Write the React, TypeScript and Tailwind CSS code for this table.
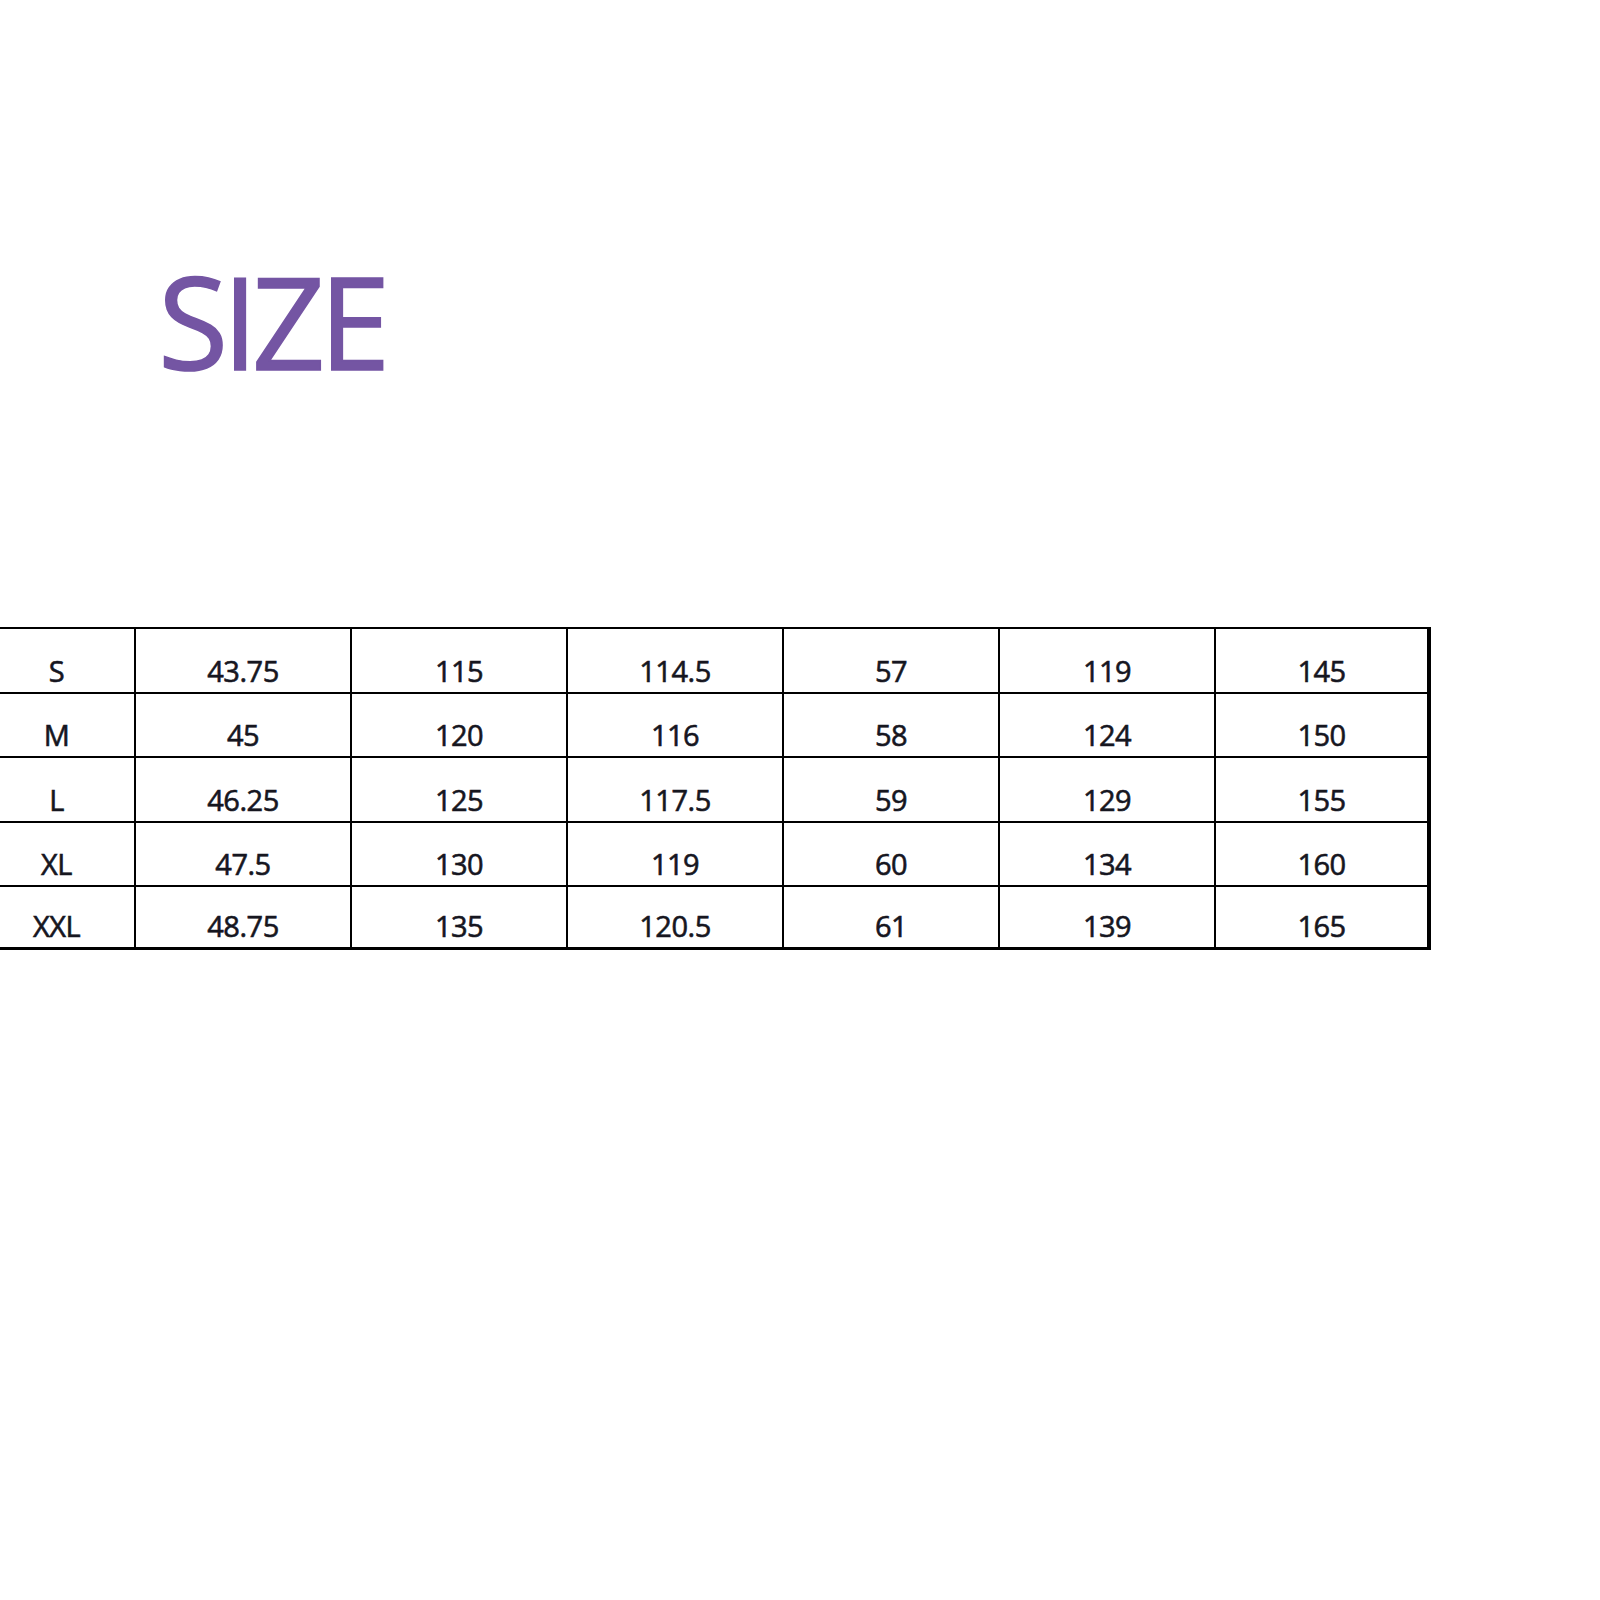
const rows = [
  ["S", "43.75", "115", "114.5", "57", "119", "145"],
  ["M", "45", "120", "116", "58", "124", "150"],
  ["L", "46.25", "125", "117.5", "59", "129", "155"],
  ["XL", "47.5", "130", "119", "60", "134", "160"],
  ["XXL", "48.75", "135", "120.5", "61", "139", "165"],
];

const rowHeights = ["h-[65px]", "h-[64px]", "h-[65px]", "h-[64px]", "h-[63px]"];

export default function App() {
  return (
    <div className="min-h-[1600px] w-full bg-white overflow-hidden font-['Open_Sans',sans-serif]">
      {/* Title */}
      <div className="ml-[158px] mt-[257px] text-[128px] leading-none tracking-[-6px] text-[#7455a3] [-webkit-text-stroke:1.5px_#7455a3]">
        SIZE
      </div>

      {/* Size table */}
      <div className="-ml-[21px] mt-[242px] w-fit border-t-2 border-black">
        {rows.map((row, r) => (
          <div key={r} className="flex">
            {row.map((cell, c) => (
              <div
                key={c}
                className={`flex items-end justify-center ${rowHeights[r]} ${
                  r === rows.length - 1 ? "border-b-[3px]" : "border-b-2"
                } pb-[7px] border-black ${
                  c === 0 ? "w-[157px] border-r-2" : c === row.length - 1 ? "w-[215px] border-r-4" : "w-[216px] border-r-2"
                } text-[29px] leading-none tracking-[-0.5px] text-[#16161f] [-webkit-text-stroke:0.6px_#16161f]`}
              >
                {cell}
              </div>
            ))}
          </div>
        ))}
      </div>
    </div>
  );
}
